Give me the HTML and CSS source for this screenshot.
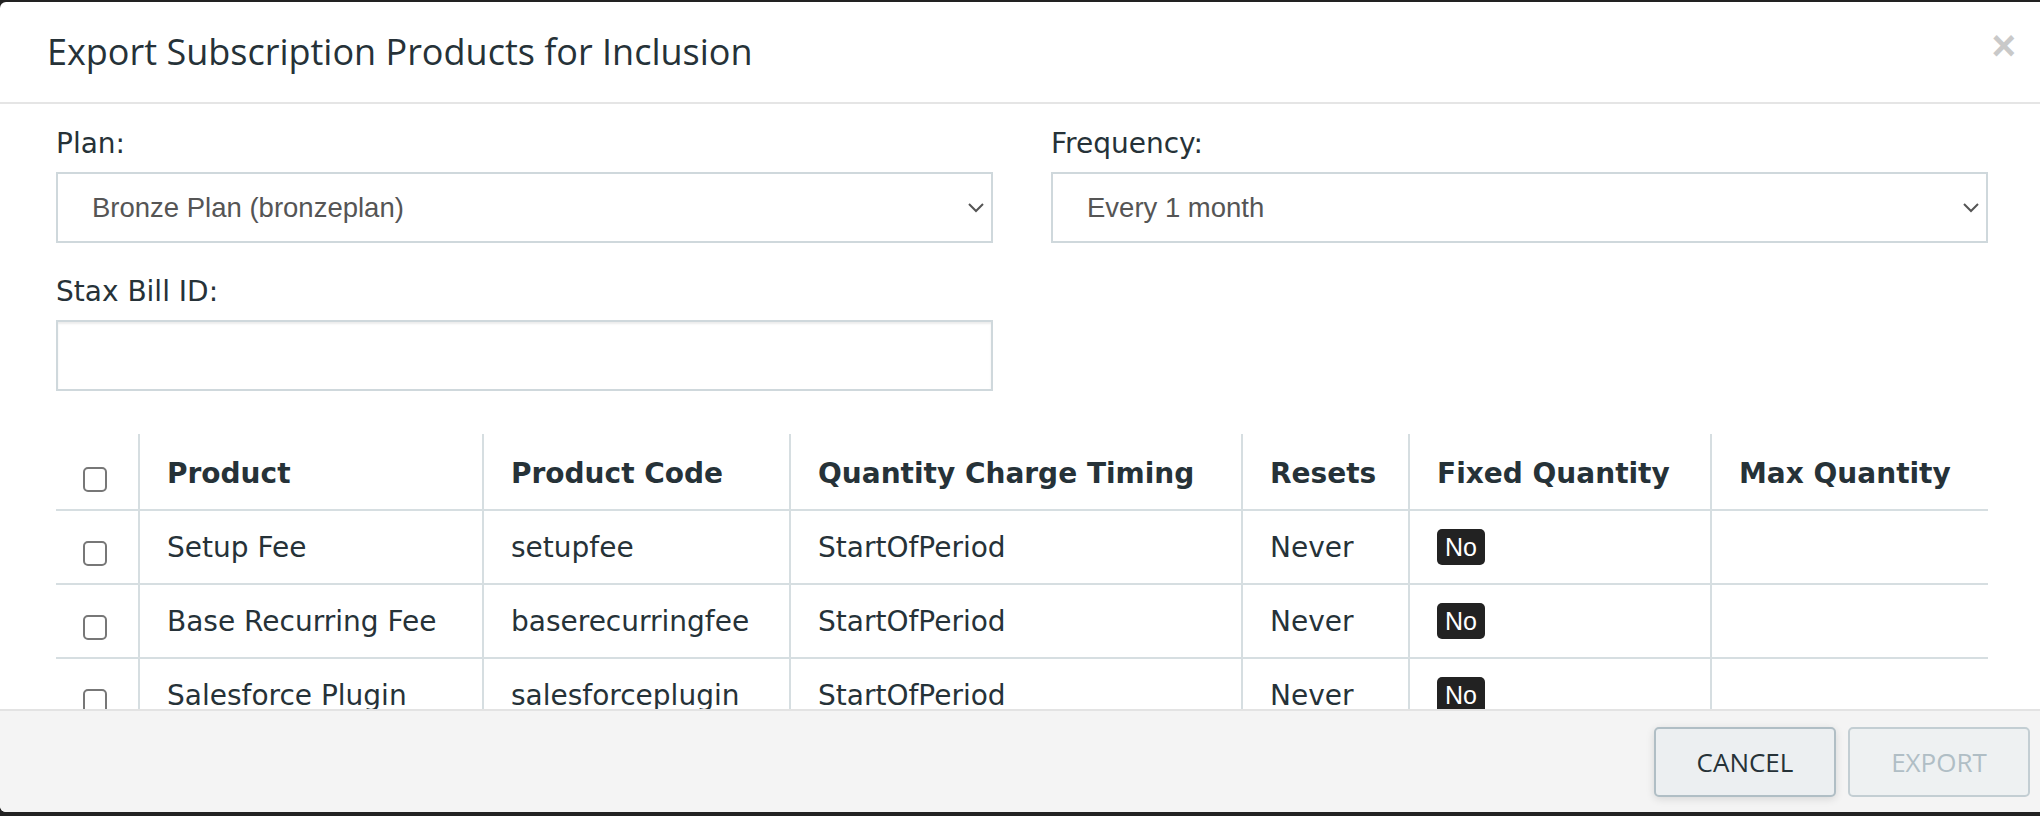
FILE: index.html
```html
<!DOCTYPE html>
<html lang="en">
<head>
  <meta charset="UTF-8">
  <meta name="viewport" content="width=device-width, initial-scale=1.0">
  <title>Export Subscription Products for Inclusion</title>
  <link rel="stylesheet" href="styles.css">
</head>
<body>

<div class="modal">
  <div class="modal-header">
    <h4 class="modal-title">Export Subscription Products for Inclusion</h4>
    <button class="close" type="button">&times;</button>
  </div>

  <div class="modal-body">
    <div class="form-row">
      <div class="form-group">
        <label for="plan">Plan:</label>
        <div class="select-wrap">
          <select id="plan" class="form-control">
            <option>Bronze Plan (bronzeplan)</option>
          </select>
          <svg class="chevron" width="16" height="10" viewBox="0 0 16 10"><path d="M1 1 L8 8 L15 1" fill="none" stroke="#555" stroke-width="2"/></svg>
        </div>
      </div>
      <div class="form-group">
        <label for="frequency">Frequency:</label>
        <div class="select-wrap">
          <select id="frequency" class="form-control">
            <option>Every 1 month</option>
          </select>
          <svg class="chevron" width="16" height="10" viewBox="0 0 16 10"><path d="M1 1 L8 8 L15 1" fill="none" stroke="#555" stroke-width="2"/></svg>
        </div>
      </div>
    </div>

    <div class="form-row">
      <div class="form-group">
        <label for="billId">Stax Bill ID:</label>
        <input id="billId" class="form-control" type="text">
      </div>
    </div>

    <table class="products">
      <colgroup>
        <col class="col-check">
        <col class="col-product">
        <col class="col-code">
        <col class="col-timing">
        <col class="col-resets">
        <col class="col-fixed">
        <col class="col-max">
      </colgroup>
      <thead>
        <tr>
          <th><input type="checkbox" class="check"></th>
          <th>Product</th>
          <th>Product Code</th>
          <th>Quantity Charge Timing</th>
          <th>Resets</th>
          <th>Fixed Quantity</th>
          <th>Max Quantity</th>
        </tr>
      </thead>
      <tbody>
        <tr>
          <td><input type="checkbox" class="check"></td>
          <td>Setup Fee</td>
          <td>setupfee</td>
          <td>StartOfPeriod</td>
          <td>Never</td>
          <td><span class="badge">No</span></td>
          <td></td>
        </tr>
        <tr>
          <td><input type="checkbox" class="check"></td>
          <td>Base Recurring Fee</td>
          <td>baserecurringfee</td>
          <td>StartOfPeriod</td>
          <td>Never</td>
          <td><span class="badge">No</span></td>
          <td></td>
        </tr>
        <tr>
          <td><input type="checkbox" class="check"></td>
          <td>Salesforce Plugin</td>
          <td>salesforceplugin</td>
          <td>StartOfPeriod</td>
          <td>Never</td>
          <td><span class="badge">No</span></td>
          <td></td>
        </tr>
      </tbody>
    </table>
  </div>

  <div class="modal-footer">
    <button class="btn btn-default" type="button">Cancel</button>
    <button class="btn btn-primary" type="button" disabled>Export</button>
  </div>
</div>

</body>
</html>
```

FILE: styles.css
```css
body {
  margin: 0;
  padding: 0;
  background-color: #222;
  font-family: "DejaVu Sans", Verdana, sans-serif;
  color: #263238;
}
.modal {
  margin-top: 2px;
  height: 810px;
  background-color: #fff;
  border-radius: 6px 0 0 6px;
  overflow: hidden;
  display: flex;
  flex-direction: column;
}
.modal-header {
  height: 100px;
  border-bottom: 2px solid #e5e5e5;
  display: flex;
  align-items: center;
  justify-content: space-between;
  padding: 0 24px 0 47px;
  flex-shrink: 0;
}
.modal-title {
  margin: 0 0 2px 0;
  font-family: "Open Sans", sans-serif;
  font-size: 36px;
  font-weight: 400;
  line-height: normal;
  color: #263238;
}
.close {
  background: none;
  border: none;
  padding: 0;
  margin-bottom: 12px;
  font-family: "Liberation Sans", Arial, sans-serif;
  font-size: 42px;
  font-weight: bold;
  line-height: 1;
  color: #c9c9c9;
  cursor: pointer;
}
.modal-body {
  flex: 1;
  overflow: hidden;
  padding: 23px 52px 0 56px;
}
.form-row {
  display: grid;
  grid-template-columns: 937px 937px;
  column-gap: 58px;
  margin-bottom: 32px;
}
.form-group label {
  display: block;
  font-size: 28px;
  line-height: normal;
  margin-bottom: 12px;
}
.select-wrap {
  position: relative;
}
.form-control {
  display: block;
  box-sizing: border-box;
  width: 100%;
  height: 71px;
  margin: 0;
  padding: 0 50px 0 34px;
  border: 2px solid #cfd8dc;
  border-radius: 0;
  background-color: #fff;
  font-family: "Liberation Sans", Arial, sans-serif;
  font-size: 27.5px;
  color: #555;
  outline: none;
}
select.form-control {
  appearance: none;
  -webkit-appearance: none;
}
input.form-control {
  height: 71px;
  box-shadow: inset 0 2px 2px rgba(0, 0, 0, 0.075);
}
.chevron {
  position: absolute;
  right: 9px;
  top: 31px;
}
.products {
  width: 1932px;
  margin-top: 43px;
  border-collapse: collapse;
  table-layout: fixed;
}
.col-check { width: 83px; }
.col-product { width: 344px; }
.col-code { width: 307px; }
.col-timing { width: 452px; }
.col-resets { width: 167px; }
.col-fixed { width: 302px; }
.col-max { width: 277px; }
th, td {
  height: 72px;
  padding: 0 0 0 27px;
  border-bottom: 2px solid #d6dee1;
  border-left: 2px solid #d6dee1;
  text-align: left;
  vertical-align: middle;
  font-size: 28px;
  white-space: nowrap;
}
th:first-child, td:first-child {
  border-left: none;
}
th {
  font-weight: bold;
  padding-top: 3px;
}
.check {
  appearance: none;
  -webkit-appearance: none;
  display: block;
  box-sizing: border-box;
  width: 24px;
  height: 25px;
  margin: 12px 0 0 0;
  border: 2px solid #777;
  border-radius: 5px;
  background-color: #fff;
}
.badge {
  display: inline-block;
  padding: 5px 8px 4px;
  border-radius: 5px;
  background-color: #222;
  color: #fff;
  font-family: "Liberation Sans", Arial, sans-serif;
  font-size: 25px;
  line-height: 1.1;
}
.modal-footer {
  flex-shrink: 0;
  height: 85px;
  border-top: 2px solid #e3e3e3;
  background-color: #f4f4f4;
  padding: 16px 10px 0 0;
  display: flex;
  justify-content: flex-end;
  align-items: flex-start;
  gap: 12px;
}
.btn {
  width: 182px;
  height: 70px;
  border: 2px solid #b0bec5;
  border-radius: 5px;
  background-color: #eceff1;
  font-family: "Open Sans", sans-serif;
  font-size: 26px;
  text-transform: uppercase;
  color: #263238;
  cursor: pointer;
}
.btn-default {
  box-shadow: 0 2px 8px rgba(0, 0, 0, 0.12);
}
.btn-primary {
  background-color: #eef1f2;
  border-color: #c3ced3;
  color: #b0bec5;
  cursor: default;
}
```
